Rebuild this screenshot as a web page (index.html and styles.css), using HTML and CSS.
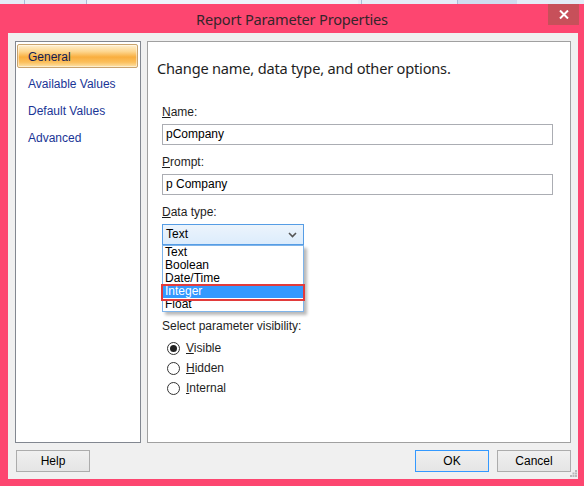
FILE: index.html
```html
<!DOCTYPE html>
<html>
<head>
<meta charset="utf-8">
<link rel="stylesheet" href="styles.css">
</head>
<body>
<div class="desk">
  <span class="dk dk1"></span><span class="dk dk2"></span><span class="dk dk3"></span><span class="dk dk4"></span>
</div>
<div class="window">
  <div class="titlebar">
    <div class="title">Report Parameter Properties</div>
    <div class="close">
      <svg width="10" height="9" viewBox="0 0 10 9"><path d="M1 0.5 L9 8.5 M9 0.5 L1 8.5" stroke="#fff" stroke-width="2"/></svg>
    </div>
  </div>
  <div class="client">
    <div class="panels">
      <nav class="nav">
        <div class="nav-item active">General</div>
        <div class="nav-item">Available Values</div>
        <div class="nav-item">Default Values</div>
        <div class="nav-item">Advanced</div>
      </nav>
      <main class="page">
        <h1 class="heading">Change name, data type, and other options.</h1>
        <div class="field">
          <div class="label"><u>N</u>ame:</div>
          <div class="input">pCompany</div>
        </div>
        <div class="field">
          <div class="label"><u>P</u>rompt:</div>
          <div class="input">p Company</div>
        </div>
        <div class="field">
          <div class="label"><u>D</u>ata type:</div>
          <div class="combo">
            <div class="select">
              <span>Text</span>
              <svg class="chev" width="9" height="6" viewBox="0 0 9 6"><path d="M1 1 L4.5 4.5 L8 1" fill="none" stroke="#555" stroke-width="1.6"/></svg>
            </div>
            <ul class="dropdown">
              <li>Text</li>
              <li>Boolean</li>
              <li>Date/Time</li>
              <li class="sel">Integer</li>
              <li>Float</li>
            </ul>
            <div class="redbox"></div>
          </div>
        </div>
        <div class="vis-label">Select parameter visibility:</div>
        <div class="radios">
          <div class="radio"><span class="circle on"></span><span><u>V</u>isible</span></div>
          <div class="radio"><span class="circle"></span><span><u>H</u>idden</span></div>
          <div class="radio"><span class="circle"></span><span><u>I</u>nternal</span></div>
        </div>
      </main>
    </div>
    <div class="buttons">
      <div class="btn">Help</div>
      <div class="spacer"></div>
      <div class="btn default">OK</div>
      <div class="btn">Cancel</div>
    </div>
    <svg class="grip" width="7" height="7" viewBox="0 0 7 7">
      <rect x="5" y="0" width="2" height="2" fill="#b8b8b8"/>
      <rect x="2.5" y="2.5" width="2" height="2" fill="#b8b8b8"/>
      <rect x="5" y="2.5" width="2" height="2" fill="#b8b8b8"/>
      <rect x="0" y="5" width="2" height="2" fill="#b8b8b8"/>
      <rect x="2.5" y="5" width="2" height="2" fill="#b8b8b8"/>
      <rect x="5" y="5" width="2" height="2" fill="#b8b8b8"/>
    </svg>
  </div>
</div>
</body>
</html>
```

FILE: styles.css
```css
* { box-sizing: border-box; }
html, body { margin: 0; padding: 0; }
body {
  width: 584px;
  height: 486px;
  overflow: hidden;
  font-family: "Liberation Sans", Arial, sans-serif;
  font-size: 12px;
  color: #000;
  background: #dfe8f4;
}
.desk {
  height: 4px;
  display: flex;
  background: #e4ecf7;
}
.dk { display: block; height: 4px; border-left: 1px solid #a9bcd8; }
.dk1 { margin-left: 24px; width: 6px; }
.dk2 { margin-left: 56px; width: 272px; background: #eef3fa; }
.dk3 { margin-left: 3px; width: 90px; }
.dk4 { margin-left: 6px; width: 60px; background: #cfdcee; }

.window {
  height: 482px;
  background: #fd4670;
  padding: 0 6px 7px 8px;
  display: flex;
  flex-direction: column;
}
.titlebar {
  height: 29px;
  display: grid;
  grid-template-columns: 1fr auto 1fr;
  margin: 0 -6px 0 -8px;
}
.title {
  grid-column: 2;
  font-family: "Noto Sans", "Open Sans", sans-serif;
  font-size: 14.6px;
  line-height: 30px;
  color: #35252b;
  letter-spacing: -0.2px;
}
.close {
  grid-column: 3;
  justify-self: end;
  align-self: start;
  width: 31px;
  height: 21px;
  margin-right: 5px;
  background: #c7505a;
  display: flex;
  align-items: center;
  justify-content: center;
}
.client {
  position: relative;
  flex: 1;
  background: #f0f0f0;
  padding: 8px 7px 7px 7px;
  display: flex;
  flex-direction: column;
}
.panels {
  height: 402px;
  display: flex;
  gap: 6px;
}
.nav {
  width: 126px;
  background: #fff;
  border: 1px solid #828790;
  padding: 2px 2px 0 1px;
}
.nav-item {
  height: 27px;
  line-height: 27px;
  padding-left: 11px;
  color: #1a3596;
}
.nav-item.active {
  height: 24px;
  line-height: 24px;
  padding-left: 10px;
  margin-bottom: 3px;
  color: #111c55;
  border: 1px solid #c9a36d;
  border-radius: 2px;
  background: linear-gradient(to bottom, #fff0d2 0%, #fdd68e 30%, #f9ae3e 55%, #fbbf5c 78%, #fde3ab 100%);
  box-shadow: inset 0 0 0 1px rgba(255,255,255,0.45);
}
.page {
  flex: 1;
  background: #fff;
  border: 1px solid #a0a0a0;
  padding: 16px 17px 0 14px;
}
.heading {
  margin: 0 0 27px -5px;
  font-family: "Noto Sans", "Open Sans", sans-serif;
  font-weight: normal;
  font-size: 14.6px;
  line-height: 20px;
  color: #1e1e1e;
  letter-spacing: -0.2px;
}
.field { margin-bottom: 10px; }
.label {
  line-height: 15px;
  margin-bottom: 4px;
  color: #1e1e1e;
}
.input {
  height: 21px;
  border: 1px solid #abadb3;
  padding-left: 3px;
  line-height: 19px;
  color: #000;
}
.combo {
  position: relative;
  width: 142px;
}
.select {
  height: 21px;
  border: 1px solid #569de5;
  background: linear-gradient(to bottom, #ecf4fc, #dcecfc);
  padding: 0 6px 0 3px;
  line-height: 19px;
  display: flex;
  align-items: center;
  justify-content: space-between;
}
.dropdown {
  position: absolute;
  left: 0;
  top: 21px;
  width: 142px;
  margin: 0;
  padding: 0;
  list-style: none;
  background: #fff;
  border: 1px solid #7eb4ea;
  box-shadow: 3px 3px 3px rgba(0,0,0,0.28);
  z-index: 2;
}
.dropdown li {
  height: 13px;
  line-height: 13px;
  padding-left: 2px;
}
.dropdown li.sel {
  background: #3399ff;
  color: #fff;
}
.redbox {
  position: absolute;
  left: -1px;
  top: 60px;
  width: 144px;
  height: 17px;
  border: 2px solid #e23b3b;
  z-index: 3;
}
.vis-label {
  margin-top: 74px;
  line-height: 15px;
  color: #1e1e1e;
}
.radios { margin-top: 4px; }
.radio {
  height: 20px;
  display: flex;
  align-items: center;
  padding-left: 5px;
  gap: 6px;
  color: #1e1e1e;
}
.circle {
  width: 13px;
  height: 13px;
  border: 1px solid #333;
  border-radius: 50%;
  background: #fff;
  display: flex;
  align-items: center;
  justify-content: center;
}
.circle.on::after {
  content: "";
  width: 7px;
  height: 7px;
  border-radius: 50%;
  background: #222;
}
.buttons {
  margin-top: 7px;
  height: 22px;
  display: flex;
  gap: 8px;
  padding-left: 1px;
}
.spacer { flex: 1; }
.btn {
  width: 74px;
  height: 22px;
  border: 1px solid #acacac;
  background: linear-gradient(to bottom, #f0f0f0, #e5e5e5);
  text-align: center;
  line-height: 21px;
  color: #000;
}
.btn.default { border-color: #3399ff; }
.grip {
  position: absolute;
  right: 1px;
  bottom: 2px;
}
```
